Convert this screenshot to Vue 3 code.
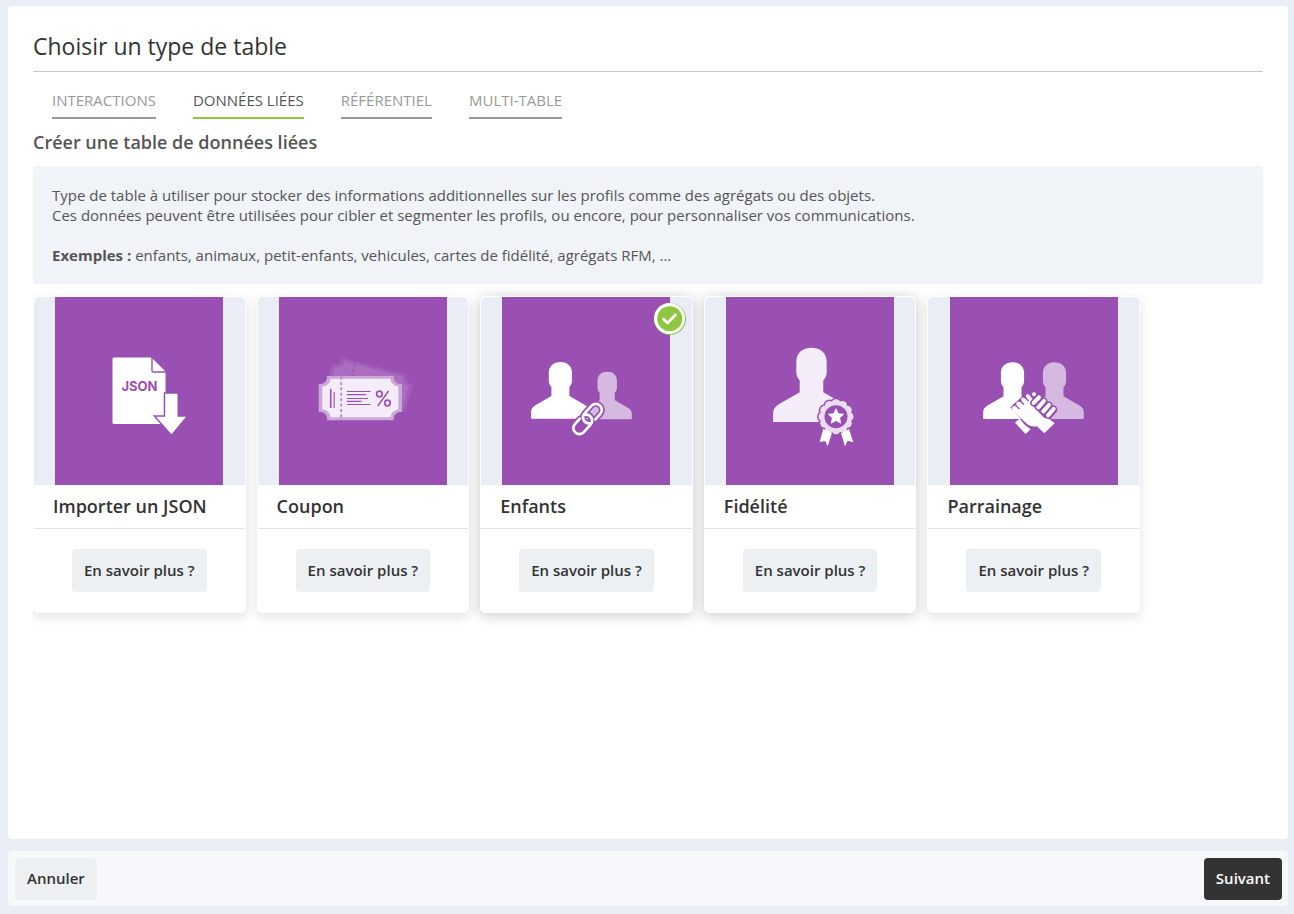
<script setup>
import { ref } from 'vue'

const tabs = ['INTERACTIONS', 'DONNÉES LIÉES', 'RÉFÉRENTIEL', 'MULTI-TABLE']
const activeTab = ref(1)

const cards = [
  { id: 'json', title: 'Importer un JSON' },
  { id: 'coupon', title: 'Coupon' },
  { id: 'enfants', title: 'Enfants' },
  { id: 'fidelite', title: 'Fidélité' },
  { id: 'parrainage', title: 'Parrainage' },
]
const selected = ref('enfants')
const focused = ref('fidelite')

const personPath =
  'M0 0C7 0 11.6 4 11.6 11V19C11.6 21 10.5 23.5 9 25V34L25 43.2C28 45.2 29.3 47.2 29.3 50V56.7H-29.3V50C-29.3 47.2-28 45.2-25 43.2L-9 34V25C-10.5 23.5-11.6 21-11.6 19V11C-11.6 4-7 0 0 0Z'
const ticketOuter =
  'M0 0H66.7V2A6.5 6.5 0 0 0 73 8H75V36H73A6.5 6.5 0 0 0 66.7 42.3V44.3H0V42.3A6.5 6.5 0 0 0-6.3 36H-8.3V8H-6.3A6.5 6.5 0 0 0 0 2Z'
const ticketInner =
  'M3.7 2.7H63.3A8.5 8.5 0 0 0 71.3 10.5V33.5A8.5 8.5 0 0 0 63.3 41.3H3.7A8.5 8.5 0 0 0-4.7 33.5V10.5A8.5 8.5 0 0 0 3.7 2.7Z'
const linkPath = 'M5 6H12.300A6 6 0 0 0 12.300-6H2.200A6 6 0 0 0-1.500 4.700'
const fingersPath = 'M176 159L192 142M190 172L207 153M205 184L222 165M219 196L236 177'

function ring(count, draw) {
  return Array.from({ length: count }, (_, i) => draw((i / count) * Math.PI * 2 - Math.PI / 2))
}
const scallops = ring(12, (a) => ({ x: 13 * Math.cos(a), y: 13 * Math.sin(a) }))
const starPoints = Array.from({ length: 10 }, (_, i) => {
  const a = (i / 10) * Math.PI * 2 - Math.PI / 2
  const r = i % 2 ? 3.8 : 8
  return `${(r * Math.cos(a)).toFixed(2)},${(r * Math.sin(a)).toFixed(2)}`
}).join(' ')
</script>

<template>
  <div class="page">
    <main class="panel">
      <h1 class="title">Choisir un type de table</h1>

      <nav class="tabs">
        <button
          v-for="(tab, i) in tabs"
          :key="tab"
          type="button"
          class="tab"
          :class="{ active: i === activeTab }"
          @click="activeTab = i"
        >{{ tab }}</button>
      </nav>

      <h2 class="subtitle">Créer une table de données liées</h2>

      <div class="info">
        <p>Type de table à utiliser pour stocker des informations additionnelles sur les profils comme des agrégats ou des objets.</p>
        <p>Ces données peuvent être utilisées pour cibler et segmenter les profils, ou encore, pour personnaliser vos communications.</p>
        <p class="examples"><strong>Exemples :</strong> enfants, animaux, petit-enfants, vehicules, cartes de fidélité, agrégats RFM, ...</p>
      </div>

      <div class="cards">
        <article
          v-for="card in cards"
          :key="card.id"
          class="card"
          :class="{ raised: card.id === selected || card.id === focused }"
          @click="selected = card.id"
        >
          <div class="cover">
            <svg class="art" viewBox="0 0 168 188" aria-hidden="true">
              <rect width="168" height="188" fill="#9950b2" />

              <g v-if="card.id === 'json'">
                <path d="M59 60.500H96.500L110.500 74.500V127H59Q57.500 127 57.500 125.500V62Q57.500 60.500 59 60.500Z" fill="#fff" />
                <path d="M97 60V73.500Q97 75 98.500 75H111" fill="none" stroke="#9950b2" stroke-width="1.400" />
                <path d="M110.200 96.800H122.500V119.800H131L116.500 137.300L101 119.800H110.200Z" fill="#fff" stroke="#9950b2" stroke-width="3" paint-order="stroke" />
                <text x="84.500" y="94" class="json-label" text-anchor="middle">JSON</text>
              </g>

              <g v-else-if="card.id === 'coupon'">
                <g transform="translate(63.3 60.700) rotate(15)" fill="#fff">
                  <path :d="ticketOuter" opacity=".08" />
                  <path :d="ticketInner" opacity=".1" />
                  <path d="M14 3V40" fill="none" stroke="#9950b2" stroke-width="1.500" stroke-dasharray="3 2.400" />
                </g>
                <g transform="translate(48 79)">
                  <path :d="ticketOuter" fill="#9950b2" />
                  <path :d="ticketOuter" fill="#fff" opacity=".5" />
                  <path :d="ticketInner" fill="#f4ecf8" />
                  <path d="M14.200 .5V44" fill="none" stroke="#b885ca" stroke-width="1.800" stroke-dasharray="3 2.400" />
                  <path d="M3.700 13V32" fill="none" stroke="#9950b2" stroke-width="1.600" />
                  <path d="M7.200 16V32" fill="none" stroke="#b47fc7" stroke-width="1.600" />
                  <path d="M20 15.500H43.500M20 22.500H41M20 28.500H43.500" fill="none" stroke="#9950b2" stroke-width="1.100" />
                  <path d="M20 18.700H39M20 25.400H34.500" fill="none" stroke="#9950b2" stroke-width="1.300" />
                  <g fill="none" stroke="#9950b2">
                    <circle cx="52.400" cy="18" r="2.800" stroke-width="1.700" />
                    <circle cx="60.500" cy="27" r="2.800" stroke-width="1.700" />
                    <path d="M61.500 15L50.800 30" stroke-width="1.500" />
                  </g>
                </g>
              </g>

              <g v-else-if="card.id === 'enfants'">
                <path :d="personPath" transform="translate(105.200 74.700) scale(.84)" fill="#d6b9e0" />
                <path :d="personPath" transform="translate(58.400 65)" fill="#fff" />
                <g transform="translate(85.600 122) rotate(-48)" fill="none" stroke-linecap="round">
                  <path :d="linkPath" stroke="#9950b2" stroke-width="6" />
                  <path :d="linkPath" transform="rotate(180)" stroke="#9950b2" stroke-width="6" />
                  <path :d="linkPath" stroke="#fff" stroke-width="2.700" />
                  <path :d="linkPath" transform="rotate(180)" stroke="#fff" stroke-width="2.700" />
                </g>
              </g>

              <g v-else-if="card.id === 'fidelite'">
                <path :d="personPath" transform="translate(85.500 50.700) scale(1.310)" fill="#f4ecf8" />
                <g transform="translate(110 119.700)">
                  <circle v-for="(s, i) in scallops" :key="'o' + i" :cx="s.x" :cy="s.y" r="6" fill="#9950b2" />
                  <circle v-for="(s, i) in scallops" :key="'s' + i" :cx="s.x" :cy="s.y" r="4.500" fill="#ebdcf0" />
                  <circle r="15.500" fill="#ebdcf0" />
                  <circle r="11.500" fill="#9950b2" />
                  <polygon :points="starPoints" fill="#fff" stroke="#fff" stroke-width=".8" stroke-linejoin="round" />
                </g>
                <path d="M97.300 132L106 135.700L101.700 149.300L99.300 144L93.700 145ZM123 132L115 136.300L119 149.300L121.700 143.700L127.300 145.300Z" fill="#fff" />
              </g>

              <g v-else>
                <path :d="personPath" transform="translate(62.500 65.300)" fill="#fff" />
                <path :d="personPath" transform="translate(104.500 65.300)" fill="#d6b9e0" />
                <g transform="translate(25 53) scale(.3333)">
                  <path d="M110 172L150 136L180 130L244 182L222 208L236 222L208 248L180 232L160 226Z" fill="#9950b2" stroke="#9950b2" stroke-width="6" stroke-linejoin="round" />
                  <path d="M120 218L134 206Q148 226 167 238L152 252Z" fill="#fff" />
                  <path d="M112 180L120 166L160 142L172 166L208 204L218 203L239 220L208 250L186 229Q168 232 156 222Z" fill="#fff" />
                  <g stroke="#fff" stroke-width="11" stroke-linecap="round">
                    <path d="M116 174L132 188M130 160L148 178M144 148L160 166M158 138L170 152" />
                  </g>
                  <g stroke="#9950b2" stroke-width="4" stroke-linecap="round">
                    <path d="M121 165L132 176M135 152L146 163M149 141L160 152" />
                  </g>
                  <g stroke-linecap="round">
                    <path :d="fingersPath" stroke="#9950b2" stroke-width="21" />
                    <path :d="fingersPath" stroke="#fff" stroke-width="12" />
                  </g>
                  <circle cx="177" cy="133" r="6" fill="#fff" />
                </g>
              </g>
            </svg>

            <svg v-if="card.id === selected" class="check" viewBox="0 0 32 32" role="img" aria-label="Sélectionné">
              <circle cx="16" cy="16" r="16" fill="#8dc63f" />
              <circle cx="15.500" cy="15.500" r="15.500" fill="#fff" />
              <circle cx="15.700" cy="15.700" r="12.500" fill="#8dc63f" />
              <path d="M9.500 16L13.500 20L21.500 11.800" fill="none" stroke="#fff" stroke-width="2.800" stroke-linecap="round" stroke-linejoin="round" />
            </svg>
          </div>
          <h3 class="card-title">{{ card.title }}</h3>
          <div class="card-actions">
            <button type="button" class="btn">En savoir plus ?</button>
          </div>
        </article>
      </div>
    </main>

    <footer class="footer">
      <button type="button" class="btn">Annuler</button>
      <button type="button" class="btn primary">Suivant</button>
    </footer>
  </div>
</template>

<style>
body {
  background: #eaeff7;
}
</style>

<style scoped>
.page {
  box-sizing: border-box;
  min-height: 100vh;
  display: flex;
  flex-direction: column;
  gap: 12px;
  padding: 6px 6px 8px 8px;
  background: #eaeff7;
  color: #333;
  font-family: "Open Sans", "Noto Sans", sans-serif;
  font-size: 15px;
}
.panel {
  flex: 1;
  padding: 25px;
  border-radius: 4px;
  background: #fff;
}
.title {
  margin: 0;
  padding-bottom: 9px;
  border-bottom: 1px solid #c8c8c8;
  font-size: 23px;
  font-weight: 400;
  line-height: 31px;
}
.tabs {
  display: flex;
  gap: 37px;
  margin-top: 19px;
  padding: 0 19px;
}
.tab {
  padding: 0 0 8px;
  border: 0;
  border-bottom: 2px solid #999;
  background: none;
  color: #999;
  font: inherit;
  line-height: 18px;
  cursor: pointer;
}
.tab.active {
  border-color: #8dc63f;
  color: #555;
}
.subtitle {
  margin: 11px 0 12px;
  color: #555;
  font-size: 18px;
  font-weight: 600;
  line-height: 24px;
}
.info {
  padding: 19px;
  border-radius: 4px;
  background: #f0f4f9;
  color: #555;
  line-height: 20px;
}
.info p {
  margin: 0;
}
.info .examples {
  margin-top: 20px;
}
.cards {
  display: grid;
  grid-template-columns: repeat(5, minmax(0, 1fr));
  gap: 11px;
  padding: 12px 10% 24px 0;
  overflow: hidden;
}
.card {
  border: 1px solid #fff;
  border-radius: 5px;
  background: #fff;
  box-shadow: 0 4px 12px rgba(0, 0, 0, 0.12);
  cursor: pointer;
}
.card.raised {
  box-shadow: 0 2px 14px rgba(0, 0, 0, 0.22);
}
.cover {
  position: relative;
  display: flex;
  justify-content: center;
  overflow: hidden;
  border-radius: 5px 5px 0 0;
  background: #e9edf5;
}
.art {
  display: block;
  width: 168px;
  height: 188px;
}
.json-label {
  fill: #9950b2;
  font-family: Inter, sans-serif;
  font-size: 13px;
  font-weight: 700;
}
.check {
  position: absolute;
  top: 6px;
  right: 6px;
  width: 32px;
  height: 32px;
}
.card-title {
  margin: 0;
  padding: 0 19px;
  border-bottom: 1px solid #e2e2e2;
  font-size: 18px;
  font-weight: 600;
  line-height: 43px;
}
.card-actions {
  display: flex;
  justify-content: center;
  padding: 20px 0;
}
.btn {
  padding: 11px 12px;
  border: 0;
  border-radius: 4px;
  background: #ecf0f3;
  color: #333;
  font: inherit;
  font-weight: 600;
  line-height: 21px;
  cursor: pointer;
}
.btn.primary {
  background: #333;
  color: #fff;
}
.footer {
  display: flex;
  justify-content: space-between;
  padding: 7px 6px 6px 7px;
  border-radius: 4px;
  background: #f6f8fc;
}
.footer .btn {
  padding: 10px 12px 11px;
}
</style>
